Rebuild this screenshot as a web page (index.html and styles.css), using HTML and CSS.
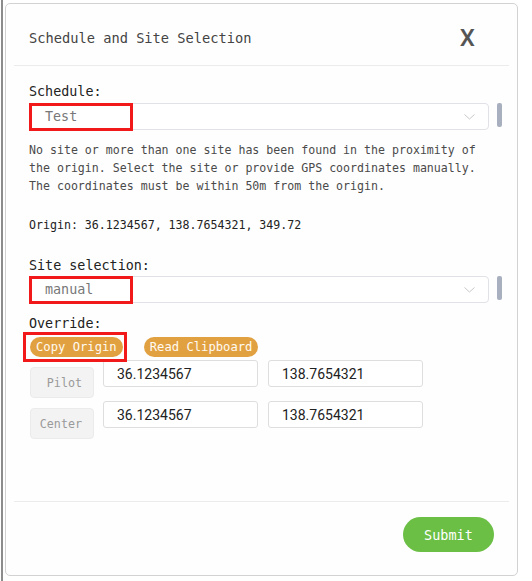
FILE: index.html
```html
<!DOCTYPE html>
<html lang="en">
<head>
    <meta charset="UTF-8">
    <meta name="viewport" content="width=device-width, initial-scale=1.0">
    <title>Schedule and Site Selection</title>
    <link rel="stylesheet" href="styles.css">
</head>
<body>
    <div class="page">
        <div class="modal">
            <div class="modal-header">
                <span class="modal-title">Schedule and Site Selection</span>
                <span class="close">X</span>
            </div>

            <div class="modal-body">
                <div class="label label-schedule">Schedule:</div>
                <div class="select-row">
                    <div class="select">
                        <span class="select-value">Test</span>
                        <svg class="chevron" width="11" height="6" viewBox="0 0 11 6"><path d="M0.5 0.5 L5.5 5 L10.5 0.5" fill="none" stroke="#c8c8c8" stroke-width="1"/></svg>
                        <div class="highlight"></div>
                    </div>
                    <div class="thumb"></div>
                </div>

                <p class="note">No site or more than one site has been found in the proximity of<br>the origin. Select the site or provide GPS coordinates manually.<br>The coordinates must be within 50m from the origin.</p>

                <p class="origin">Origin: 36.1234567, 138.7654321, 349.72</p>

                <div class="label label-site">Site selection:</div>
                <div class="select-row select-row-site">
                    <div class="select">
                        <span class="select-value">manual</span>
                        <svg class="chevron" width="11" height="6" viewBox="0 0 11 6"><path d="M0.5 0.5 L5.5 5 L10.5 0.5" fill="none" stroke="#c8c8c8" stroke-width="1"/></svg>
                        <div class="highlight"></div>
                    </div>
                    <div class="thumb"></div>
                </div>

                <div class="label label-override">Override:</div>
                <div class="pill-row">
                    <button class="pill pill-copy">Copy Origin<span class="highlight highlight-pill"></span></button>
                    <button class="pill">Read Clipboard</button>
                </div>

                <div class="coord-row">
                    <button class="coord-btn">Pilot</button>
                    <input class="coord-input" type="text" value="36.1234567">
                    <input class="coord-input" type="text" value="138.7654321">
                </div>
                <div class="coord-row">
                    <button class="coord-btn">Center</button>
                    <input class="coord-input" type="text" value="36.1234567">
                    <input class="coord-input" type="text" value="138.7654321">
                </div>
            </div>

            <div class="modal-footer">
                <button class="submit">Submit</button>
            </div>
        </div>
    </div>
</body>
</html>
```

FILE: styles.css
```css
body {
    margin: 0;
    padding-left: 1px;
    background: #fff;
    font-family: "DejaVu Sans Mono", monospace;
}

.page {
    border-left: 2px solid #8c8c8c;
    height: 581px;
    box-sizing: border-box;
    padding: 3px 0 0 2px;
}

.modal {
    width: 513px;
    height: 573px;
    box-sizing: border-box;
    border: 1px solid #d2d2d2;
    border-radius: 5px;
    background: #fefefe;
    display: flex;
    flex-direction: column;
}

.modal-header {
    height: 62px;
    box-sizing: border-box;
    margin: 0 8px;
    padding: 7px 34px 0 15px;
    border-bottom: 1px solid #ebebeb;
    display: flex;
    align-items: center;
    justify-content: space-between;
}

.modal-title {
    font-size: 13.7px;
    color: #444;
}

.close {
    font-family: Roboto, sans-serif;
    font-weight: 500;
    font-size: 24px;
    color: #555;
}

.modal-body {
    flex: 1;
    padding: 18px 0 0 23px;
}

.label {
    font-size: 13.4px;
    line-height: 16px;
    color: #222;
}

.select-row {
    display: flex;
    align-items: flex-start;
    margin-top: 3px;
}

.select-row-site {
    margin-top: 2px;
}

.select {
    position: relative;
    width: 460px;
    height: 27px;
    box-sizing: border-box;
    border: 1px solid #e1e1e8;
    border-radius: 4px;
    background: #fff;
    display: flex;
    align-items: center;
    justify-content: space-between;
    padding: 0 13px 0 15px;
}

.select-value {
    font-size: 13.4px;
    color: #777;
}

.thumb {
    width: 5px;
    height: 24px;
    margin-left: 8px;
    border-radius: 2px;
    background: #a8b0c0;
}

.highlight {
    position: absolute;
    left: -1px;
    top: -1px;
    width: 104px;
    height: 28px;
    box-sizing: border-box;
    border: 3px solid #f2191b;
}

.note {
    margin: 11px 0 0;
    font-size: 11.6px;
    line-height: 18px;
    color: #4a4a4a;
}

.origin {
    margin: 21px 0 0;
    font-size: 11.6px;
    line-height: 18px;
    color: #222;
}

.label-site {
    margin-top: 24px;
}

.label-override {
    margin-top: 13px;
}

.pill-row {
    display: flex;
    gap: 21px;
    margin: 5px 0 0 1px;
}

.pill {
    position: relative;
    height: 20px;
    padding: 0 6px;
    border: none;
    border-radius: 10px;
    background: #e2a141;
    color: #fffaf2;
    font-family: "DejaVu Sans Mono", monospace;
    font-size: 12.2px;
}

.highlight-pill {
    left: -7px;
    top: -5px;
    width: 104px;
    height: 30px;
}

.coord-row {
    display: flex;
    align-items: flex-start;
    gap: 10px;
    margin-top: 3px;
}

.coord-btn {
    width: 64px;
    height: 31px;
    margin: 7px -1px 0 1px;
    box-sizing: border-box;
    border: 1px solid #ebebeb;
    border-radius: 4px;
    background: #f3f3f3;
    color: #9a9a9a;
    text-align: right;
    padding: 0 11px 0 0;
    font-family: "DejaVu Sans Mono", monospace;
    font-size: 11.7px;
}

.coord-input {
    width: 155px;
    height: 27px;
    box-sizing: border-box;
    border: 1px solid #dedede;
    border-radius: 3px;
    padding: 0 13px;
    font-family: Roboto, sans-serif;
    font-size: 14px;
    color: #222;
}

.modal-footer {
    margin: 0 8px;
    padding: 15px 15px 23px;
    border-top: 1px solid #ececec;
    display: flex;
    justify-content: flex-end;
}

.submit {
    width: 91px;
    height: 35px;
    border: none;
    border-radius: 18px;
    background: #6bbf45;
    color: #fff;
    font-family: "DejaVu Sans Mono", monospace;
    font-size: 13.5px;
}
```
